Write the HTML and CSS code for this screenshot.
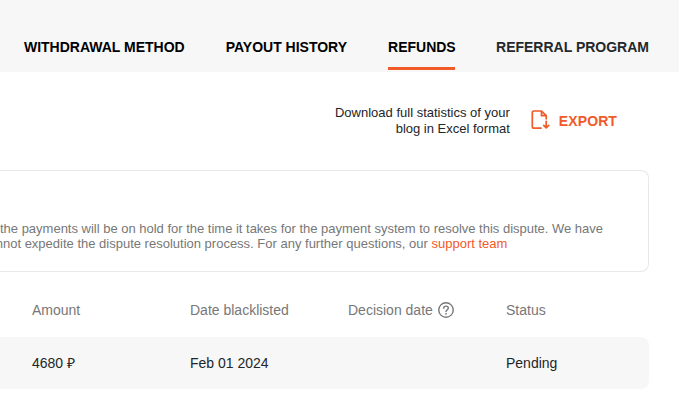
FILE: index.html
```html
<!DOCTYPE html>
<html lang="en">
<head>
<meta charset="utf-8">
<title>Refunds</title>
<link rel="stylesheet" href="styles.css">
</head>
<body>
<nav class="tabs">
  <a class="tab tab-withdrawal">WITHDRAWAL METHOD</a>
  <a class="tab tab-history">PAYOUT HISTORY</a>
  <a class="tab tab-refunds active">REFUNDS</a>
  <a class="tab tab-referral">REFERRAL PROGRAM</a>
</nav>
<main>
  <section class="export">
    <p class="export-text">Download full statistics of your<br>blog in Excel format</p>
    <a class="export-link">
      <svg class="file-icon" width="20" height="20" viewBox="0 0 20 20" fill="none" stroke="currentColor" stroke-width="1.7" stroke-linecap="round" stroke-linejoin="round">
        <path d="M10 18.2H3Q1.3 18.2 1.3 16.5V2.7Q1.3 1 3 1H10.5L15.2 5.7V8.8M10.5 1V5.7H15.2"/>
        <path d="M15.2 11.3V17.8M12.7 15.4L15.2 17.9L17.7 15.4"/>
      </svg>
      <span>EXPORT</span>
    </a>
  </section>
  <section class="notice">
    <p class="line">the payments will be on hold for the time it takes for the payment system to resolve this dispute. We have</p>
    <p class="line line-second">cannot expedite the dispute resolution process. For any further questions, our <a class="support">support team</a></p>
  </section>
  <section class="table">
    <div class="row head">
      <span>Amount</span>
      <span>Date blacklisted</span>
      <span class="decision">Decision date
        <svg width="16" height="16" viewBox="0 0 16 16" fill="none" stroke="currentColor" stroke-width="1.4" stroke-linecap="round">
          <circle cx="8" cy="8" r="7.25"/>
          <path d="M5.8 6.2Q5.8 4.1 8 4.1Q10.3 4.1 10.3 6.1Q10.3 7.1 9.2 7.8Q8 8.5 8 9.6"/>
          <circle cx="8" cy="11.8" r=".9" fill="currentColor" stroke="none"/>
        </svg>
      </span>
      <span>Status</span>
    </div>
    <div class="row data">
      <span class="amount">4680 ₽</span>
      <span>Feb 01 2024</span>
      <span></span>
      <span>Pending</span>
    </div>
  </section>
</main>
</body>
</html>
```
FILE: styles.css
```css
* { box-sizing: border-box; }
body {
  margin: 0;
  height: 413px;
  overflow: hidden;
  background: #fff;
  color: #222629;
  font-family: "Liberation Sans", Arial, sans-serif;
  font-size: 14px;
}
p { margin: 0; }
.tabs {
  display: flex;
  justify-content: flex-end;
  gap: 41px;
  height: 72px;
  padding: 24px 30px 2px 0;
  background: #f7f7f7;
  color: #000;
  font-weight: 700;
  line-height: 46px;
  white-space: nowrap;
}
.tab { height: 46px; border-bottom: 3px solid transparent; }
.tab.active { border-color: #f15a29; }
.tab-refunds { width: 67px; }
.tab-referral { color: #25282b; }
.export {
  display: flex;
  justify-content: flex-end;
  align-items: center;
  height: 98px;
  padding-right: 62px;
}
.export-text {
  font-size: 13px;
  line-height: 16px;
  text-align: right;
}
.export-link {
  display: flex;
  align-items: center;
  gap: 8px;
  margin-left: 21px;
  color: #f15a29;
  font-weight: 700;
  letter-spacing: .1px;
}
.file-icon { margin-top: -2px; }
.notice {
  height: 102px;
  margin-right: 30px;
  padding-top: 50px;
  border: 1px solid #e8e8e8;
  border-left: 0;
  border-radius: 0 8px 8px 0;
  color: #777;
  font-size: 13px;
  line-height: 15px;
  white-space: nowrap;
}
.line { letter-spacing: -.008px; }
.line-second { margin-left: -18px; letter-spacing: 0; }
.support { color: #f15a29; }
.table { margin: 12px 30px 0 0; }
.row {
  display: grid;
  grid-template-columns: 158px 158px 158px 1fr;
  align-items: center;
  height: 52px;
  padding-left: 32px;
  line-height: 16px;
}
.head { height: 53px; padding-bottom: 1px; color: #777; }
.decision { display: flex; align-items: center; gap: 5px; }
.amount { height: 16px; }
.data { background: #f7f7f7; border-radius: 0 8px 8px 0; }
```
